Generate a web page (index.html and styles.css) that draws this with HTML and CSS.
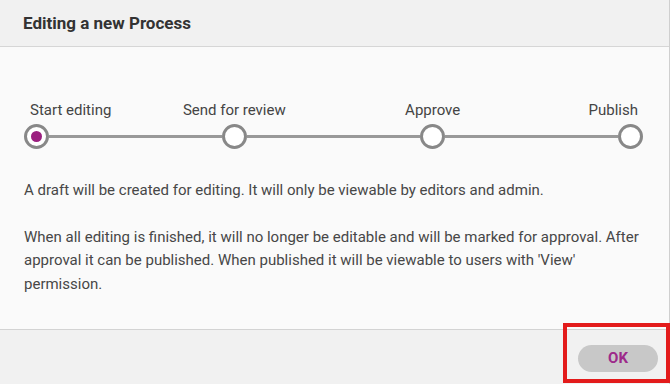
FILE: index.html
```html
<!DOCTYPE html>
<html lang="en">
<head>
    <meta charset="UTF-8">
    <meta name="viewport" content="width=device-width, initial-scale=1.0">
    <title>Editing a new Process</title>
    <link rel="stylesheet" href="styles.css">
</head>
<body>
    <div class="dialog">
        <div class="dialog-header">Editing a new Process</div>

        <div class="dialog-body">
            <div class="stepper">
                <div class="step-labels">
                    <div class="step-label first">Start editing</div>
                    <div class="step-label">Send for review</div>
                    <div class="step-label">Approve</div>
                    <div class="step-label last">Publish</div>
                </div>
                <div class="step-track">
                    <div class="step-dot active"></div>
                    <div class="step-line"></div>
                    <div class="step-dot"></div>
                    <div class="step-line"></div>
                    <div class="step-dot"></div>
                    <div class="step-line"></div>
                    <div class="step-dot"></div>
                </div>
            </div>

            <p class="info">A draft will be created for editing. It will only be viewable by editors and admin.</p>
            <p class="info">When all editing is finished, it will no longer be editable and will be marked for approval. After approval it can be published. When published it will be viewable to users with 'View' permission.</p>
        </div>

        <div class="dialog-footer">
            <button class="ok-btn">OK</button>
        </div>
    </div>

    <!-- highlight around the OK button -->
    <div class="highlight"></div>
</body>
</html>
```

FILE: styles.css
```css
body {
    margin: 0;
    font-family: Roboto, "Liberation Sans", sans-serif;
    background-color: #f1f1f1;
}

.dialog {
    width: 669px;
    height: 384px;
    border-right: 1px solid #cfcfcf;
    display: flex;
    flex-direction: column;
}

.dialog-header {
    height: 46px;
    padding-left: 23px;
    display: flex;
    align-items: center;
    font-size: 17px;
    font-weight: bold;
    color: #333;
    background-color: #f1f1f1;
    border-bottom: 1px solid #d6d6d6;
}

.dialog-body {
    height: 229px;
    padding: 53px 24px 0 24px;
    background-color: #fafafa;
    border-bottom: 1px solid #d3d3d3;
}

.stepper {
    width: 619px;
}

.step-labels {
    display: flex;
    justify-content: space-between;
    height: 20px;
    margin-bottom: 4px;
}

.step-label {
    width: 24px;
    display: flex;
    justify-content: center;
    white-space: nowrap;
    font-size: 15px;
    line-height: 20px;
    color: #444;
}

.step-label.first {
    justify-content: flex-start;
    padding-left: 6px;
    box-sizing: border-box;
}

.step-label.last {
    justify-content: flex-end;
    padding-right: 5px;
    box-sizing: border-box;
}

.step-track {
    display: flex;
    align-items: center;
}

.step-dot {
    width: 19px;
    height: 19px;
    border: 3px solid #888;
    border-radius: 50%;
    background-color: #fff;
    display: flex;
    align-items: center;
    justify-content: center;
    flex-shrink: 0;
}

.step-dot.active::after {
    content: "";
    width: 11px;
    height: 11px;
    border-radius: 50%;
    background-color: #9b1f7f;
}

.step-line {
    flex: 1;
    height: 3px;
    background-color: #999;
}

.info {
    margin: 30px 0 0 0;
    font-size: 15px;
    line-height: 23.5px;
    color: #474747;
}

.info + .info {
    margin-top: 23px;
}

.dialog-footer {
    flex: 1;
    display: flex;
    align-items: center;
    justify-content: flex-end;
    padding-right: 11px;
    background-color: #f1f1f1;
}

.ok-btn {
    width: 80px;
    height: 27px;
    border: none;
    border-radius: 14px;
    background-color: #c8c8c8;
    color: #9d2a8a;
    font-family: Roboto, "Liberation Sans", sans-serif;
    font-size: 15px;
    font-weight: bold;
    margin-top: 2px;
    cursor: pointer;
}

.highlight {
    position: absolute;
    left: 563px;
    top: 323px;
    width: 99px;
    height: 52px;
    border: 4px solid #e31b1b;
}
```
